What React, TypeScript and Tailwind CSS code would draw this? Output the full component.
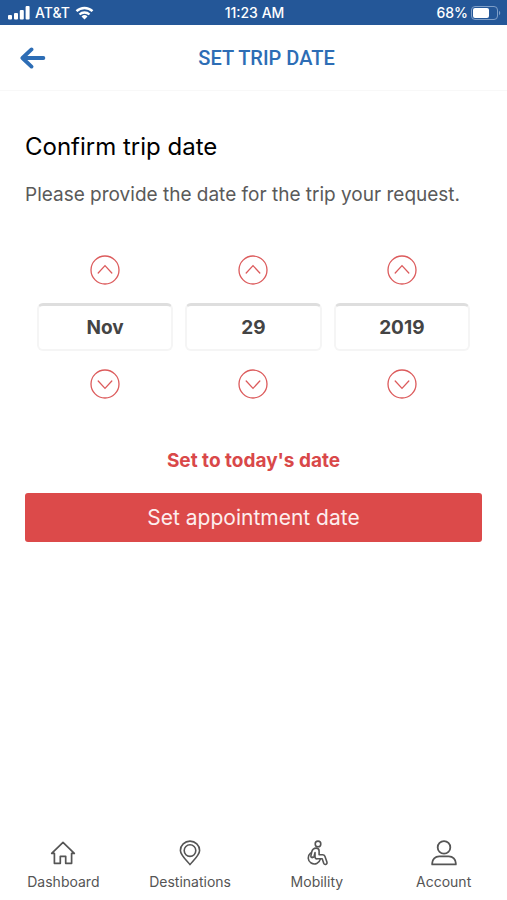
import React from "react";
import { useState } from "react";

const months = [
  "Jan",
  "Feb",
  "Mar",
  "Apr",
  "May",
  "Jun",
  "Jul",
  "Aug",
  "Sep",
  "Oct",
  "Nov",
  "Dec",
];

const SignalIcon = () => (
  <svg width="22" height="14" viewBox="0 0 22 14" fill="currentColor">
    <rect x="0" y="9" width="4" height="4.500" rx="1" />
    <rect x="6" y="7" width="4" height="6.500" rx="1" />
    <rect x="11.800" y="4" width="4" height="9.500" rx="1" />
    <rect x="17.600" y="0" width="4" height="13.500" rx="1" />
  </svg>
);

const WifiIcon = () => (
  <svg width="19" height="14" viewBox="0 0 18 14" fill="none">
    <path d="M1 5.2a11.500 11.500 0 0 1 16 0" stroke="currentColor" strokeWidth="2.4" />
    <path d="M4 8.500a7.200 7.200 0 0 1 10 0" stroke="currentColor" strokeWidth="2.3" />
    <path d="M9 13.600l-3-3.100a4.300 4.300 0 0 1 6 0z" fill="currentColor" />
  </svg>
);

const BatteryIcon = () => (
  <svg width="30" height="14" viewBox="0 0 30 14" fill="none">
    <rect x="0.5" y="0.5" width="26" height="13" rx="3.5" stroke="#7f9fc8" />
    <rect x="2" y="2" width="16" height="10" rx="2" fill="currentColor" />
    <path d="M28 4.8c1.7.8 1.7 3.6 0 4.4z" fill="#7f9fc8" />
  </svg>
);

const BackIcon = () => (
  <svg
    width="26"
    height="22"
    viewBox="0 0 26 22"
    fill="none"
    stroke="currentColor"
    strokeWidth="3.8"
    strokeLinecap="round"
    strokeLinejoin="round"
  >
    <path d="M11.500 2.400L2.400 11l9.100 8.600M3 11h20.400" />
  </svg>
);

const UpIcon = () => (
  <svg width="30" height="30" viewBox="0 0 30 30" fill="none" stroke="currentColor">
    <circle cx="15" cy="15" r="14" strokeWidth="1.3" />
    <path d="M8.2 18L15 10.6l6.8 7.4" strokeWidth="1.3" strokeLinecap="round" />
  </svg>
);

const DownIcon = () => (
  <svg width="30" height="30" viewBox="0 0 30 30" fill="none" stroke="currentColor">
    <circle cx="15" cy="15" r="14" strokeWidth="1.3" />
    <path d="M8.2 12l6.8 7.4 6.8-7.4" strokeWidth="1.3" strokeLinecap="round" />
  </svg>
);

const HomeIcon = () => (
  <svg
    width="26"
    height="26"
    viewBox="0 0 26 26"
    fill="none"
    stroke="currentColor"
    strokeWidth="1.7"
    strokeLinejoin="round"
  >
    <path d="M13 2.400L1.700 13.400h2.700v9.900h5.900v-7h5.400v7h5.900v-9.900h2.700z" />
  </svg>
);

const PinIcon = () => (
  <svg width="26" height="26" viewBox="0 0 26 26" fill="none" stroke="currentColor" strokeWidth="1.600">
    <path d="M13 24.600c-3-3.800-9.600-9.600-9.600-14.200a9.600 9.300 0 0 1 19.200 0c0 4.600-6.600 10.400-9.600 14.200z" strokeLinejoin="round" />
    <circle cx="13" cy="10.600" r="5.800" />
  </svg>
);

const WheelchairIcon = () => (
  <svg
    width="26"
    height="26"
    viewBox="0 0 26 26"
    fill="none"
    stroke="currentColor"
    strokeWidth="1.600"
    strokeLinecap="round"
    strokeLinejoin="round"
  >
    <circle cx="14" cy="3.900" r="2.800" />
    <path d="M8.700 17.400c-1.300.2-2-.5-1.800-1.600l.8-3.800c.6-2.400 2.200-3.900 4.400-3.900 2.100 0 3 1.200 3 2.900v3.700h3.500c1.200 0 1.900.5 2.300 1.600l2 5.700c.4 1.300-.2 2.200-1.200 2.400-1 .2-1.600-.2-2-1.200l-1.500-4.400h-5.400" />
    <path d="M8.700 17.400c.9-.1 1.200-.5 1.400-1.200l.9-3.600v3.900c0 1.300.6 2.300 1.800 2.300" />
    <path d="M6.500 13.100a6.100 6.100 0 1 0 9.800 6" />
  </svg>
);

const UserIcon = () => (
  <svg width="26" height="26" viewBox="0 0 26 26" fill="none" stroke="currentColor" strokeWidth="1.800">
    <circle cx="13" cy="7.400" r="6.300" />
    <path d="M1.200 24.400v-1.200c0-4 3-6.800 7-6.800h9.600c4 0 7 2.800 7 6.800v1.200z" strokeLinejoin="round" />
  </svg>
);

const navItems = [
  { name: "Dashboard", icon: <HomeIcon /> },
  { name: "Destinations", icon: <PinIcon /> },
  { name: "Mobility", icon: <WheelchairIcon /> },
  { name: "Account", icon: <UserIcon /> },
];

const DateField = ({
  label,
  value,
  onStep,
}: {
  label: string;
  value: string | number;
  onStep: (step: number) => void;
}) => {
  return (
    <div className="flex flex-1 min-w-0 flex-col items-center gap-[18px]">
      <button
        type="button"
        aria-label={`Next ${label}`}
        className="text-[#dc5b5c] cursor-pointer"
        onClick={() => onStep(1)}
      >
        <UpIcon />
      </button>
      <input
        type="text"
        aria-label={label}
        readOnly
        value={value}
        className="w-full h-12 text-center text-[19px] font-bold text-[#444444] bg-white border-2 border-t-[3px] border-[#f5f5f5] border-t-[#dedede] rounded-md outline-none"
      />
      <button
        type="button"
        aria-label={`Previous ${label}`}
        className="text-[#dc5b5c] cursor-pointer"
        onClick={() => onStep(-1)}
      >
        <DownIcon />
      </button>
    </div>
  );
};

const App = () => {
  const [date, setDate] = useState(new Date(2019, 10, 29));

  const moveDate = (y: number, m: number, d: number) => {
    setDate(
      new Date(date.getFullYear() + y, date.getMonth() + m, date.getDate() + d)
    );
  };

  return (
    <div className="flex flex-col min-h-screen bg-white font-['Inter',sans-serif]">
      {/* status bar */}
      <div className="grid grid-cols-3 items-center h-[25px] pl-2 pr-[6px] bg-[#245798] text-white text-sm font-medium">
        <div className="flex items-center gap-[5px]">
          <SignalIcon />
          <span>AT&amp;T</span>
          <WifiIcon />
        </div>
        <span className="text-center">11:23 AM</span>
        <div className="flex items-center justify-end gap-[3px]">
          <span>68%</span>
          <BatteryIcon />
        </div>
      </div>

      <header className="grid grid-cols-[26px_1fr] items-center h-[66px] px-5 border-b border-[#f8f8f8] text-[#2d6db5]">
        <button type="button" aria-label="Back" className="cursor-pointer">
          <BackIcon />
        </button>
        <h1 className="text-center text-xl font-medium font-['Roboto',sans-serif]">
          SET TRIP DATE
        </h1>
      </header>

      <main className="flex-1 px-[25px] pt-10">
        <h2 className="text-2xl text-black">Confirm trip date</h2>
        <p className="mt-5 text-[19px] leading-6 text-[#5a5a5a]">
          Please provide the date for the trip your request.
        </p>

        <div className="flex gap-3 px-3 mt-12">
          <DateField
            label="month"
            value={months[date.getMonth()]}
            onStep={(step) => moveDate(0, step, 0)}
          />
          <DateField
            label="day"
            value={date.getDate()}
            onStep={(step) => moveDate(0, 0, step)}
          />
          <DateField
            label="year"
            value={date.getFullYear()}
            onStep={(step) => moveDate(step, 0, 0)}
          />
        </div>

        <div className="flex flex-col items-center gap-5 mt-[50px]">
          <button
            type="button"
            className="text-[19px] leading-6 font-bold text-[#d94849] cursor-pointer"
            onClick={() => setDate(new Date())}
          >
            Set to today's date
          </button>
          <button
            type="button"
            className="w-full h-[49px] rounded-[3px] bg-[#dc4a4a] text-[#fdeeee] text-[21px] cursor-pointer"
          >
            Set appointment date
          </button>
        </div>
      </main>

      <nav className="grid grid-cols-4 pb-2">
        {navItems.map((item) => {
          return (
            <a
              href="#"
              key={item.name}
              className="flex flex-col items-center gap-[6px] text-sm text-[#555555]"
            >
              {item.icon}
              {item.name}
            </a>
          );
        })}
      </nav>
    </div>
  );
};

export default App;
